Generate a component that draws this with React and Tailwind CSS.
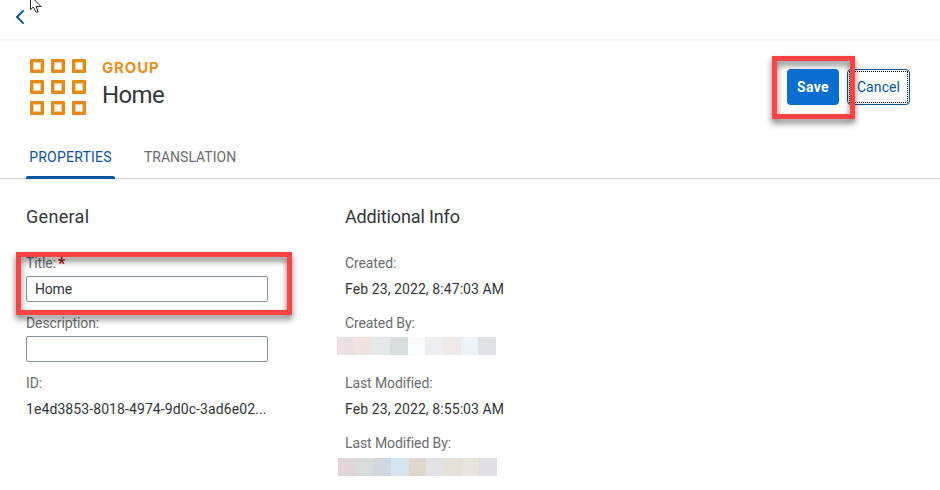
const CREATED_BY = [
  ['w-[18px]', 'bg-[#eae0e4]'], ['w-[17px]', 'bg-[#efe3de]'], ['w-[18px]', 'bg-[#e2e9e8]'],
  ['w-[18px]', 'bg-[#d5dddf]'], ['w-[17px]', 'bg-[#f8fcfd]'], ['w-[18px]', 'bg-[#eeedf1]'],
  ['w-[18px]', 'bg-[#f0e9ea]'], ['w-[17px]', 'bg-[#ebf4f8]'], ['w-[18px]', 'bg-[#e0e2e8]'],
];
const MODIFIED_BY = [
  ['w-[18px]', 'bg-[#e2d5da]'], ['w-[17px]', 'bg-[#d7ddd9]'], ['w-[18px]', 'bg-[#d0d7e0]'],
  ['w-[18px]', 'bg-[#d6e3f1]'], ['w-[17px]', 'bg-[#e1d6cc]'], ['w-[18px]', 'bg-[#e3e2e8]'],
  ['w-[18px]', 'bg-[#e7e0d7]'], ['w-[17px]', 'bg-[#e8e6dc]'], ['w-[18px]', 'bg-[#e1dde4]'],
];

function Redacted({ cells, className }) {
  return (
    <div className={`flex h-[18px] ${className}`}>
      {cells.map(([width, color], i) => (
        <span key={i} className={`${width} ${color}`} />
      ))}
    </div>
  );
}

function Field({ label, required, children }) {
  return (
    <div className="h-[60px]">
      <div className="mb-[3px] flex h-5 items-center text-[#6a6d70]">
        <span className="tracking-[-0.1px]">{label}</span>
        {required && <span className="mt-[2px] ml-[2px] text-base leading-none font-bold text-[#b00]">*</span>}
      </div>
      <div className="flex h-[26px] items-center tracking-[0.09px]">{children}</div>
    </div>
  );
}

function Highlight({ className }) {
  return (
    <div className={`pointer-events-none absolute border-[5px] border-[#ff4343] drop-shadow-[0px_4px_3px_rgba(0,0,0,0.55)] ${className}`} />
  );
}

export default function App() {
  return (
    <div className="relative h-[490px] w-[940px] overflow-hidden bg-white font-['Roboto','Liberation_Sans',sans-serif] text-sm text-[#32363a]">
      <header className="h-10 border-b border-[#f5f5f5] pt-[9px] pl-[15px] shadow-[0_1px_1px_#fafafa]">
        <svg width="10" height="16" viewBox="0 0 10 16" fill="none" stroke="#0854a0" strokeWidth="1.9">
          <path d="M8.6 1.4 2 8l6.6 6.6" />
        </svg>
      </header>
      <svg className="absolute top-0 left-[30px]" width="13" height="13" viewBox="0 0 13 13">
        <path d="M.5-5V9.6L3.3 7l2.6 5h2.3L6.1 6.5H11L.5-4" fill="#fff" stroke="#23232d" />
      </svg>

      <div className="flex h-[95px] pt-[19px] pr-[30px] pl-[30px]">
        <div className="grid h-14 w-14 grid-cols-3 gap-[7px]">
          {Array.from({ length: 9 }, (_, i) => (
            <span key={i} className="h-[14px] w-[14px] rounded-[1px] border-[3px] border-[#e38b16] shadow-[inset_0_0_0_1px_#f3cb97]" />
          ))}
        </div>
        <div className="ml-4">
          <div className="h-[18px] font-['Inter','Roboto',sans-serif] text-[15px] leading-[18px] font-bold tracking-[0.85px] text-[#e9901f]">GROUP</div>
          <h1 className="text-2xl leading-9 tracking-[-0.6px]">Home</h1>
        </div>
        <div className="mt-[10px] ml-auto flex gap-2">
          <button className="h-9 w-[52px] rounded-[4px] bg-[#0a6ed1] font-bold tracking-[0.4px] text-white">Save</button>
          <button className="h-9 w-[63px] rounded-[4px] border border-[#0854a0] p-px text-[#0854a0]">
            <span className="flex h-full items-center justify-center border border-dotted border-black tracking-[0.1px]">Cancel</span>
          </button>
        </div>
      </div>

      <nav className="flex h-11 gap-[29px] border-b border-[#d5d5d5] pl-[26px] shadow-[0_1px_1px_#f3f3f3]">
        <div className="relative h-11 w-[89px] pt-3 text-center leading-5 tracking-[0.22px] text-[#0854a0]">
          PROPERTIES
          <span className="absolute bottom-0 left-0 h-[3px] w-full rounded-t-[2px] bg-[#0854a0]" />
        </div>
        <div className="pt-3 leading-5 text-[#6a6d70]">TRANSLATION</div>
      </nav>

      <main className="flex pt-[26px] pl-[26px]">
        <section className="w-[319px]">
          <h2 className="mb-[24px] h-6 text-lg leading-6 tracking-[0.3px]">General</h2>
          <Field label="Title:" required>
            <div className="flex h-[26px] w-[242px] items-center rounded-[2px] border border-[#89919a] pl-2 tracking-[-0.2px]">Home</div>
          </Field>
          <Field label="Description:">
            <div className="h-[26px] w-[242px] rounded-[2px] border border-[#89919a]" />
          </Field>
          <Field label="ID:">1e4d3853-8018-4974-9d0c-3ad6e02...</Field>
        </section>
        <section>
          <h2 className="mb-[24px] h-6 text-lg leading-6 tracking-[-0.14px]">Additional Info</h2>
          <Field label="Created:">Feb 23, 2022, 8:47:03 AM</Field>
          <Field label="Created By:"><Redacted cells={CREATED_BY} className="-mt-[6px] -ml-2" /></Field>
          <Field label="Last Modified:">Feb 23, 2022, 8:55:03 AM</Field>
          <Field label="Last Modified By:"><Redacted cells={MODIFIED_BY} className="-mt-[4px] -ml-[7px]" /></Field>
        </section>
      </main>

      <Highlight className="top-[56px] left-[772px] h-[63px] w-[83px]" />
      <Highlight className="top-[252px] left-[16px] h-[63px] w-[276px]" />
    </div>
  );
}
